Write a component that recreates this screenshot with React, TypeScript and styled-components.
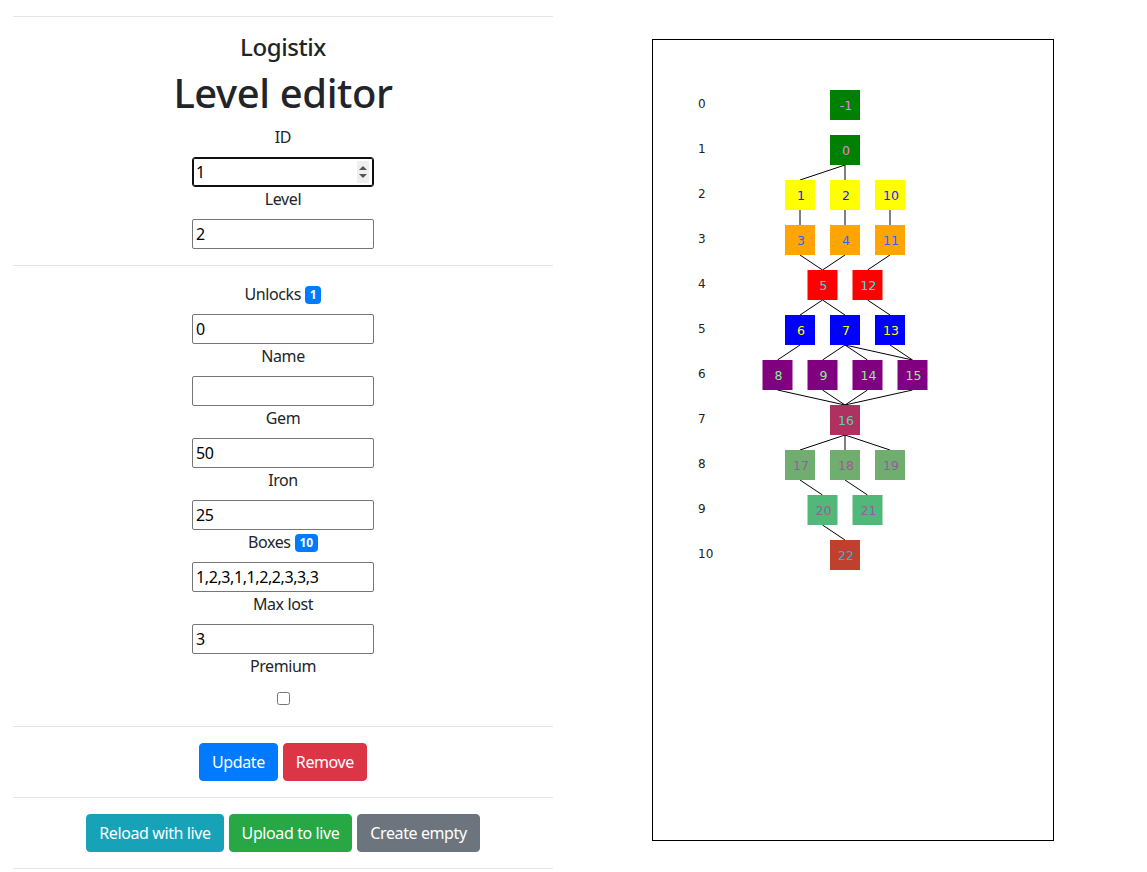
import React from "react";
import styled, { createGlobalStyle } from "styled-components";

const GlobalStyle = createGlobalStyle`
  html, body { margin: 0; padding: 0; }
  body {
    font-family: "Segoe UI", "Noto Sans", "Open Sans", sans-serif;
    font-size: 16px;
    line-height: 1.5;
    letter-spacing: -0.025em;
    color: #212529;
    background: #fff;
  }
  *, *::before, *::after { box-sizing: border-box; }
`;

const Page = styled.div`
  display: flex;
  align-items: flex-start;
`;

const EditorColumn = styled.div`
  width: 540px;
  margin-left: 13px;
  text-align: center;
`;

const Rule = styled.hr`
  margin: 16px 0;
  border: 0;
  border-top: 1px solid rgba(0, 0, 0, 0.1);
  height: 0;
`;

const AppName = styled.h4`
  margin: 0 0 8px;
  font-size: 24px;
  font-weight: 500;
  line-height: 28px;
`;

const Title = styled.h1`
  margin: 0 0 8px;
  font-size: 40px;
  font-weight: 500;
  line-height: 48px;
`;

const Field = styled.div`
  display: flex;
  flex-direction: column;
  align-items: center;
`;

const Label = styled.label`
  display: inline-block;
  margin-bottom: 8px;
  line-height: 24px;
`;

const Badge = styled.span`
  display: inline-block;
  margin-left: 4px;
  padding: 3px 4.8px;
  font-size: 12px;
  font-weight: 700;
  line-height: 1;
  letter-spacing: 0;
  color: #fff;
  background: #007bff;
  border-radius: 4px;
  vertical-align: 1px;
`;

const InputWrap = styled.div`
  position: relative;
  width: 182px;
  height: 30px;
`;

const TextInput = styled.input<{ $focused?: boolean }>`
  display: block;
  width: 182px;
  height: 30px;
  margin: 0;
  padding: 1px 3px;
  font: inherit;
  letter-spacing: -0.025em;
  line-height: 24px;
  color: #000;
  background: #fff;
  border: 1px solid ${(p) => (p.$focused ? "#101010" : "#767676")};
  border-radius: ${(p) => (p.$focused ? "3px" : "2px")};
  box-shadow: ${(p) => (p.$focused ? "inset 0 0 0 1px #101010" : "none")};
  outline: none;
`;

const Spinner = styled.div`
  position: absolute;
  right: 5px;
  top: 4px;
  width: 12px;
  height: 22px;
  background: #efefef;
  display: flex;
  flex-direction: column;
  align-items: center;
  justify-content: space-around;
  padding: 3px 0;
`;

const Arrow = styled.span<{ $down?: boolean }>`
  width: 0;
  height: 0;
  border-left: 4px solid transparent;
  border-right: 4px solid transparent;
  ${(p) =>
    p.$down
      ? "border-top: 4px solid #555;"
      : "border-bottom: 4px solid #555;"}
`;

const CheckRow = styled.div`
  height: 24px;
  display: flex;
  align-items: center;
  justify-content: center;
`;

const Checkbox = styled.input`
  width: 13px;
  height: 13px;
  margin: 0 0 0 1px;
`;

const ButtonRow = styled.div`
  display: flex;
  justify-content: center;
  gap: 5px;
`;

const variantColors: Record<string, string> = {
  primary: "#007bff",
  danger: "#dc3545",
  info: "#17a2b8",
  success: "#28a745",
  secondary: "#6c757d",
};

const Button = styled.button<{ $variant: string }>`
  padding: 6px 12px;
  font: inherit;
  font-size: 16px;
  letter-spacing: -0.025em;
  line-height: 24px;
  color: #fff;
  background: ${(p) => variantColors[p.$variant]};
  border: 1px solid ${(p) => variantColors[p.$variant]};
  border-radius: 4px;
  cursor: pointer;
`;

const CanvasColumn = styled.div`
  margin-left: 99px;
  padding-top: 39px;
`;

const CanvasFrame = styled.div`
  width: 402px;
  height: 802px;
  border: 1px solid #000;
  letter-spacing: 0;
  svg {
    display: block;
  }
`;

type RowStyle = { fill: string; text: string };

const rows: { ids: number[]; style: RowStyle }[] = [
  { ids: [-1], style: { fill: "#008000", text: "#ee82ee" } },
  { ids: [0], style: { fill: "#008000", text: "#ee82ee" } },
  { ids: [1, 2, 10], style: { fill: "#ffff00", text: "#1a1aff" } },
  { ids: [3, 4, 11], style: { fill: "#ffa500", text: "#2a6ae8" } },
  { ids: [5, 12], style: { fill: "#ff0000", text: "#1ee6e6" } },
  { ids: [6, 7, 13], style: { fill: "#0000ff", text: "#ffff00" } },
  { ids: [8, 9, 14, 15], style: { fill: "#800080", text: "#90ee90" } },
  { ids: [16], style: { fill: "#b03060", text: "#66cdaa" } },
  { ids: [17, 18, 19], style: { fill: "#70ae70", text: "#9b5a9b" } },
  { ids: [20, 21], style: { fill: "#52b87a", text: "#9b5a9b" } },
  { ids: [22], style: { fill: "#c0402e", text: "#34b0d8" } },
];

const edges: [number, number][] = [
  [0, 1], [0, 2], [1, 3], [2, 4], [10, 11], [3, 5], [4, 5], [11, 12],
  [5, 6], [5, 7], [12, 13], [6, 8], [7, 9], [7, 14], [7, 15], [13, 15],
  [8, 16], [9, 16], [14, 16], [15, 16], [16, 17], [16, 18], [16, 19],
  [17, 20], [18, 21], [20, 22],
];

const BOX = 30;
const STEP = 45;
const CX = 192;
const TOP = 50;

const positions: Record<number, { x: number; y: number }> = {};
rows.forEach((row, r) => {
  const n = row.ids.length;
  row.ids.forEach((id, i) => {
    positions[id] = { x: CX + (i - (n - 1) / 2) * STEP, y: TOP + r * STEP };
  });
});

function LevelGraph() {
  return (
    <svg width={400} height={800} viewBox="0 0 400 800">
      {edges.map(([a, b]) => (
        <line
          key={`${a}-${b}`}
          x1={positions[a].x}
          y1={positions[a].y + BOX}
          x2={positions[b].x}
          y2={positions[b].y}
          stroke="#000"
          strokeWidth={1}
        />
      ))}
      {rows.map((row, r) => (
        <g key={r}>
          <text
            x={45}
            y={TOP + r * STEP + BOX / 2 - 1}
            dominantBaseline="central"
            fontFamily="DejaVu Sans, Verdana, sans-serif"
            fontSize={12}
            fill="#222"
          >
            {r}
          </text>
          {row.ids.map((id) => {
            const p = positions[id];
            return (
              <g key={id}>
                <rect x={p.x - BOX / 2} y={p.y} width={BOX} height={BOX} fill={row.style.fill} />
                <text
                  x={p.x + 1}
                  y={p.y + BOX / 2}
                  textAnchor="middle"
                  dominantBaseline="central"
                  fontFamily="DejaVu Sans, Verdana, sans-serif"
                  fontSize={12.5}
                  fill={row.style.text}
                >
                  {id}
                </text>
              </g>
            );
          })}
        </g>
      ))}
    </svg>
  );
}

function InputField({
  label,
  value,
  badge,
  focused,
  spinner,
}: {
  label: string;
  value: string;
  badge?: string;
  focused?: boolean;
  spinner?: boolean;
}) {
  return (
    <Field>
      <Label>
        {label}
        {badge && <Badge>{badge}</Badge>}
      </Label>
      <InputWrap>
        <TextInput $focused={focused} defaultValue={value} />
        {spinner && (
          <Spinner>
            <Arrow />
            <Arrow $down />
          </Spinner>
        )}
      </InputWrap>
    </Field>
  );
}

export default function App() {
  return (
    <>
      <GlobalStyle />
      <Page>
        <EditorColumn>
          <Rule />
          <AppName>Logistix</AppName>
          <Title>Level editor</Title>
          <InputField label="ID" value="1" focused spinner />
          <InputField label="Level" value="2" />
          <Rule />
          <InputField label="Unlocks" value="0" badge="1" />
          <InputField label="Name" value="" />
          <InputField label="Gem" value="50" />
          <InputField label="Iron" value="25" />
          <InputField label="Boxes" value="1,2,3,1,1,2,2,3,3,3" badge="10" />
          <InputField label="Max lost" value="3" />
          <Field>
            <Label>Premium</Label>
            <CheckRow>
              <Checkbox type="checkbox" />
            </CheckRow>
          </Field>
          <Rule />
          <ButtonRow>
            <Button $variant="primary">Update</Button>
            <Button $variant="danger">Remove</Button>
          </ButtonRow>
          <Rule />
          <ButtonRow>
            <Button $variant="info">Reload with live</Button>
            <Button $variant="success">Upload to live</Button>
            <Button $variant="secondary">Create empty</Button>
          </ButtonRow>
          <Rule />
        </EditorColumn>
        <CanvasColumn>
          <CanvasFrame>
            <LevelGraph />
          </CanvasFrame>
        </CanvasColumn>
      </Page>
    </>
  );
}
